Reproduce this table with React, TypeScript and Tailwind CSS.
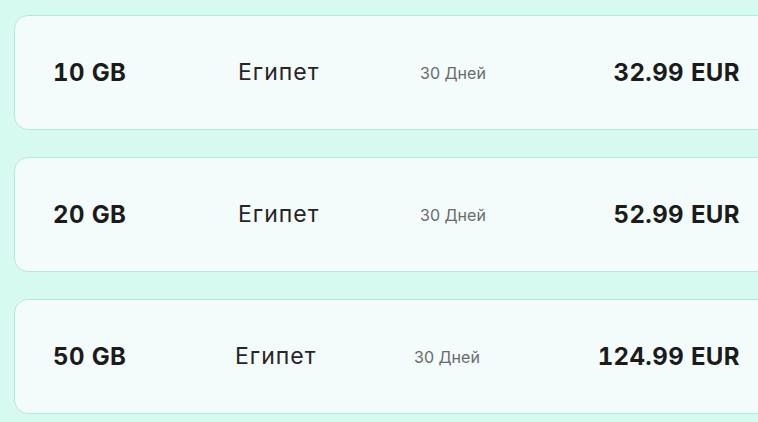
import React from "react";

const rows = [
  { gb: "10 GB", price: "32.99 EUR", c1: "w-[185px]", c2: "w-[182px]" },
  { gb: "20 GB", price: "52.99 EUR", c1: "w-[185px]", c2: "w-[182px]" },
  { gb: "50 GB", price: "124.99 EUR", c1: "w-[182px]", c2: "w-[179px]" },
];

export default function App() {
  return (
    <div
      className="w-[758px] h-[422px] overflow-hidden bg-[#d7faf0] flex flex-col gap-[27px] pt-[15px]"
      style={{ fontFamily: "Inter, 'Noto Sans', sans-serif" }}
    >
      {rows.map((r) => (
        <div
          key={r.gb}
          className="ml-[14px] w-[764px] h-[115px] shrink-0 rounded-[14px] border-[1.5px] border-[#b4e9dd] bg-[#f4fbfb] flex items-center pl-[38px] pr-[37px]"
        >
          <div className={`${r.c1} text-[24px] font-bold text-[#1b1b1b] tracking-[0.4px] tabular-nums`}>{r.gb}</div>
          <div className={`${r.c2} text-[23px] text-[#262626] tracking-[1px]`}>Египет</div>
          <div className="text-[16px] text-[#6a6a6a]">30 Дней</div>
          <div className="ml-auto text-[24px] font-bold text-[#1b1b1b] tracking-[0.4px] tabular-nums">{r.price}</div>
        </div>
      ))}
    </div>
  );
}
